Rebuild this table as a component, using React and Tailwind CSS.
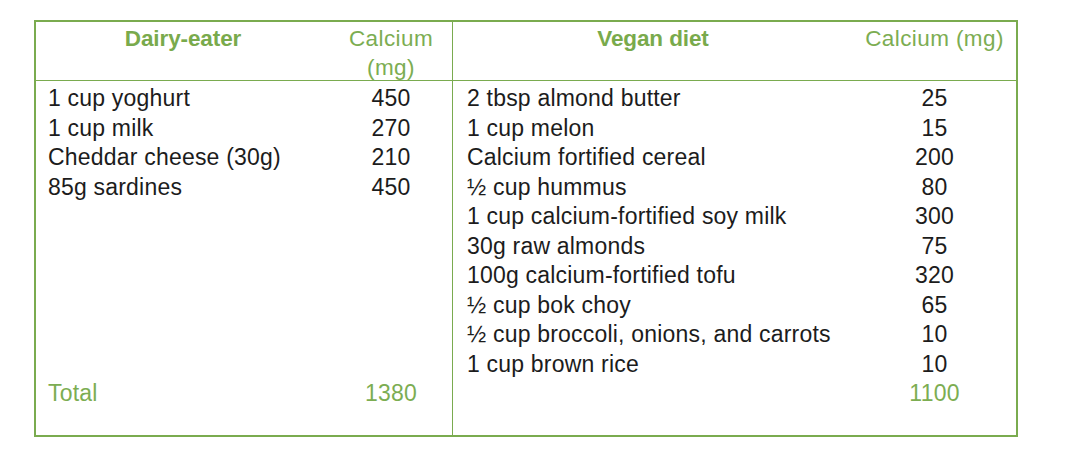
import React from 'react';

// calcium comparison table
const dairy = [
  ['1 cup yoghurt', '450'],
  ['1 cup milk', '270'],
  ['Cheddar cheese (30g)', '210'],
  ['85g sardines', '450'],
];

const vegan = [
  ['2 tbsp almond butter', '25'],
  ['1 cup melon', '15'],
  ['Calcium fortified cereal', '200'],
  ['½ cup hummus', '80'],
  ['1 cup calcium-fortified soy milk', '300'],
  ['30g raw almonds', '75'],
  ['100g calcium-fortified tofu', '320'],
  ['½ cup bok choy', '65'],
  ['½ cup broccoli, onions, and carrots', '10'],
  ['1 cup brown rice', '10'],
];

function Half({ title, rows, total, totalLabel, nameW, valW, padL, divider }) {
  return (
    <div className={`flex flex-col h-full ${divider ? 'border-r border-[#7aab4f]' : ''}`}>
      {/* header */}
      <div className="flex h-[59px] border-b border-[#7aab4f] pt-[2px]">
        <div className="text-center font-bold text-[22.5px] leading-[29px] text-[#79aa4c] tracking-[-0.1px]" style={{ width: nameW }}>
          {title}
        </div>
        <div className="text-center text-[22.5px] leading-[29px] text-[#7cad52] tracking-[0.4px]" style={{ width: valW }}>
          Calcium (mg)
        </div>
      </div>

      {/* body */}
      <div className="flex flex-col pt-[3px] text-[23px] leading-[29.5px] tracking-[0.2px] text-[#1c1c1c]">
        <div className="h-[295px]">
          {rows.map(([name, val]) => (
            <div key={name} className="flex h-[29.5px]">
              <div style={{ width: nameW, paddingLeft: padL }} className="whitespace-nowrap">{name}</div>
              <div style={{ width: valW }} className="text-center">{val}</div>
            </div>
          ))}
        </div>
        <div className="flex h-[29.5px] text-[#7cad52]">
          <div style={{ width: nameW, paddingLeft: padL }}>{totalLabel}</div>
          <div style={{ width: valW }} className="text-center">{total}</div>
        </div>
      </div>
    </div>
  );
}

export default function App() {
  return (
    <div className="w-[1066px] h-[474px] bg-white pt-[20px] pl-[34px]" style={{ fontFamily: '"Liberation Sans", Arial, Helvetica, sans-serif' }}>
      <div className="w-[984px] h-[417px] border-2 border-[#7aab4f] flex">
        <div className="w-[417px]">
          <Half title="Dairy-eater" rows={dairy} total="1380" totalLabel="Total" nameW={294} valW={122} padL={12} divider />
        </div>
        <div className="flex-1">
          <Half title="Vegan diet" rows={vegan} total="1100" totalLabel="" nameW={400} valW={163} padL={14} />
        </div>
      </div>
    </div>
  );
}
